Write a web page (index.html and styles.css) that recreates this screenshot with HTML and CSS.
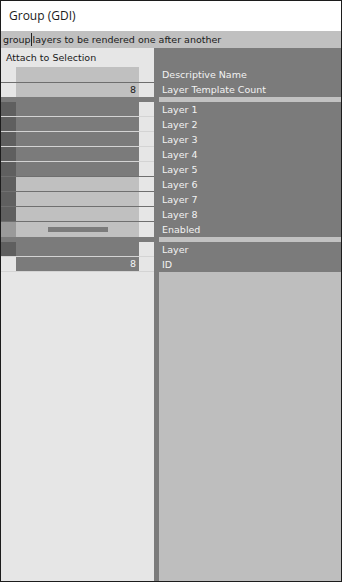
FILE: index.html
```html
<!DOCTYPE html>
<html lang="en">
<head>
    <meta charset="UTF-8">
    <title>Group (GDI)</title>
    <link rel="stylesheet" href="styles.css">
</head>
<body>
<div class="win col-box">
    <div class="title">Group (GDI)</div>
    <div class="desc">group<span class="caret"></span>layers to be rendered one after another</div>

    <div class="main col-box flex1">
        <div class="tr row-box attach">
            <div class="lt"><span class="attach-txt">Attach to Selection</span></div>
            <div class="strip"></div>
            <div class="rt"></div>
        </div>
        <div class="tr row-box top-a">
            <div class="lt row-box"><div class="hd light"></div><div class="val pale"></div><div class="sp"></div></div>
            <div class="strip"></div>
            <div class="rt">Descriptive Name</div>
        </div>
        <div class="tr row-box top-b">
            <div class="lt row-box"><div class="hd light"></div><div class="val pale num">8</div><div class="sp"></div></div>
            <div class="strip"></div>
            <div class="rt">Layer Template Count</div>
        </div>
        <div class="tr row-box band">
            <div class="lt"></div>
            <div class="strip"></div>
            <div class="rt"></div>
        </div>

        <div class="tr row-box item lines-light">
            <div class="lt row-box"><div class="hd"></div><div class="val"></div><div class="sp"></div></div>
            <div class="strip"></div>
            <div class="rt">Layer 1</div>
        </div>
        <div class="tr row-box item lines-light">
            <div class="lt row-box"><div class="hd"></div><div class="val"></div><div class="sp"></div></div>
            <div class="strip"></div>
            <div class="rt">Layer 2</div>
        </div>
        <div class="tr row-box item lines-light">
            <div class="lt row-box"><div class="hd"></div><div class="val"></div><div class="sp"></div></div>
            <div class="strip"></div>
            <div class="rt">Layer 3</div>
        </div>
        <div class="tr row-box item lines-light">
            <div class="lt row-box"><div class="hd"></div><div class="val"></div><div class="sp"></div></div>
            <div class="strip"></div>
            <div class="rt">Layer 4</div>
        </div>
        <div class="tr row-box item lines-dark">
            <div class="lt row-box"><div class="hd"></div><div class="val"></div><div class="sp"></div></div>
            <div class="strip"></div>
            <div class="rt">Layer 5</div>
        </div>
        <div class="tr row-box item lines-dark">
            <div class="lt row-box"><div class="hd"></div><div class="val pale"></div><div class="sp"></div></div>
            <div class="strip"></div>
            <div class="rt">Layer 6</div>
        </div>
        <div class="tr row-box item lines-dark">
            <div class="lt row-box"><div class="hd"></div><div class="val pale"></div><div class="sp"></div></div>
            <div class="strip"></div>
            <div class="rt">Layer 7</div>
        </div>
        <div class="tr row-box item lines-dark">
            <div class="lt row-box"><div class="hd"></div><div class="val pale"></div><div class="sp"></div></div>
            <div class="strip"></div>
            <div class="rt">Layer 8</div>
        </div>
        <div class="tr row-box item no-line">
            <div class="lt row-box"><div class="hd mid"></div><div class="val pale row-box center"><div class="bar"></div></div><div class="sp"></div></div>
            <div class="strip"></div>
            <div class="rt">Enabled</div>
        </div>
        <div class="tr row-box band">
            <div class="lt"></div>
            <div class="strip"></div>
            <div class="rt"></div>
        </div>

        <div class="tr row-box item lines-light">
            <div class="lt row-box"><div class="hd"></div><div class="val"></div><div class="sp"></div></div>
            <div class="strip"></div>
            <div class="rt">Layer</div>
        </div>
        <div class="tr row-box item lines-light">
            <div class="lt row-box"><div class="hd light"></div><div class="val num">8</div><div class="sp"></div></div>
            <div class="strip"></div>
            <div class="rt">ID</div>
        </div>

        <div class="tr row-box rest flex1">
            <div class="lt"></div>
            <div class="strip"></div>
            <div class="rt"></div>
        </div>
    </div>
</div>
</body>
</html>
```

FILE: styles.css
```css
html,body{margin:0;padding:0;}
body{font-family:"DejaVu Sans",sans-serif;}

.row-box{display: -webkit-flex;display: flex;flex-direction:row;flex-wrap: nowrap;}
.col-box{display: -webkit-flex;display: flex;flex-direction:column;flex-wrap: nowrap;}
.flex1{flex:1 1 auto;}
.center{align-items:center;justify-content:center;}

.win{width:342px;height:582px;box-sizing:border-box;border:1px solid #1c1c1c;background:#e6e6e6;overflow:hidden;}

.title{height:30px;line-height:30px;background:#fff;padding-left:8px;font-family:"Open Sans",sans-serif;font-size:12px;color:#1a1a1a;}
.desc{height:17px;line-height:17px;background:#c0c0c0;padding-left:2px;font-size:9.5px;color:#1a1a1a;white-space:nowrap;}
.caret{display:inline-block;width:1px;height:13px;background:#222;vertical-align:-3px;margin-right:1px;}

.main{min-height:0;}
.tr{flex-shrink:0;}
.tr>.lt{width:153px;flex-shrink:0;background:#e6e6e6;box-sizing:border-box;}
.tr>.strip{width:5px;flex-shrink:0;background:#7b7b7b;}
.tr>.rt{flex:1 1 auto;background:#7b7b7b;color:#f2f2f2;font-size:9.5px;padding-left:3px;white-space:nowrap;}

.attach{height:19px;}
.attach-txt{display:block;padding:4px 0 0 5px;font-size:9.5px;color:#1a1a1a;}

.top-a{height:16px;}
.top-a>.lt{border-bottom:1px solid #6e6e6e;}
.top-b{height:14px;}
.top-a>.rt,.top-b>.rt{line-height:15px;}
.top-b>.rt{line-height:13px;}

.band{height:5px;}
.band>.lt{background:#7b7b7b;}
.band>.rt{background:#c2c2c2;}

.item{height:15px;}
.item>.rt{line-height:15px;}
.item>.lt{border-bottom:1px solid #d4d4d4;}
.lines-dark>.lt{border-bottom-color:#6f6f6f;}
.no-line>.lt{border-bottom:none;}

.hd{width:15px;flex-shrink:0;background:#5f5f5f;}
.hd.light{background:#e6e6e6;}
.hd.mid{background:#9a9a9a;}
.val{width:123px;flex-shrink:0;background:#7b7b7b;box-sizing:border-box;}
.val.pale{background:#c0c0c0;}
.sp{flex:1 1 auto;background:#e6e6e6;}
.num{text-align:right;padding-right:3px;font-size:9.5px;color:#f4f4f4;line-height:14px;}
.val.pale.num{color:#1a1a1a;}
.bar{width:60px;height:5px;background:#7b7b7b;}

.rest>.rt{background:#bebebe;}
```
